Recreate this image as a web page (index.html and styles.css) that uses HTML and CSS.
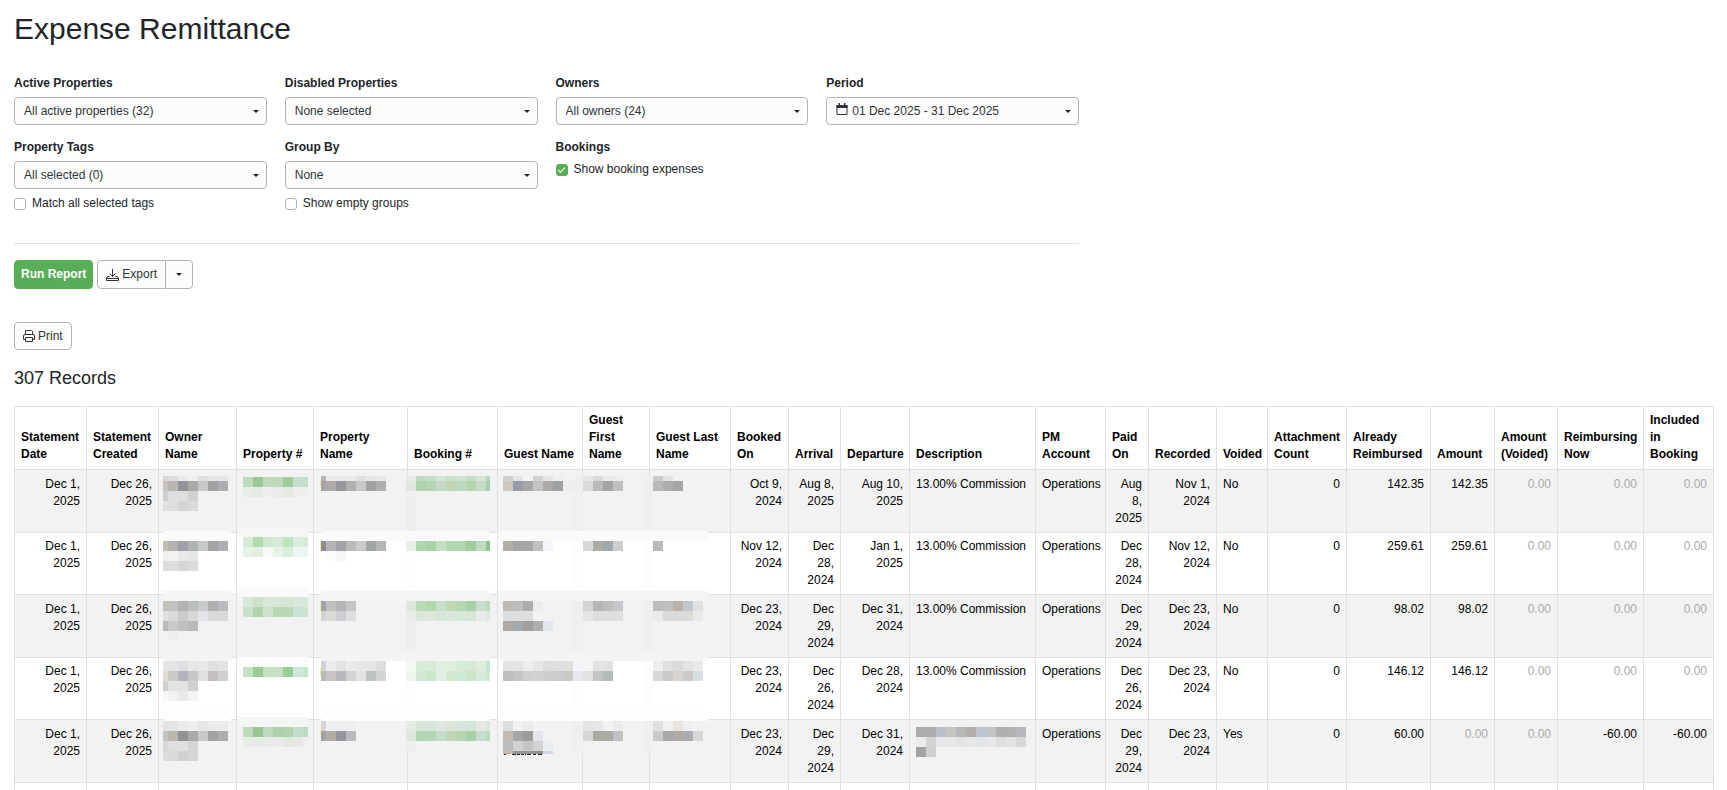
FILE: index.html
```html
<!DOCTYPE html>
<html lang="en">
<head>
<meta charset="utf-8">
<title>Expense Remittance</title>
<link rel="stylesheet" href="styles.css">
</head>
<body>
<main class="page">
  <h1 class="title">Expense Remittance</h1>
  <form class="filters">
    <div class="field">
      <label class="label" for="active">Active Properties</label>
      <div class="picker"><select class="control" id="active"><option>All active properties (32)</option></select></div>
    </div>
    <div class="field">
      <label class="label" for="disabled">Disabled Properties</label>
      <div class="picker"><select class="control" id="disabled"><option>None selected</option></select></div>
    </div>
    <div class="field">
      <label class="label" for="owners">Owners</label>
      <div class="picker"><select class="control" id="owners"><option>All owners (24)</option></select></div>
    </div>
    <div class="field">
      <label class="label" for="period">Period</label>
      <div class="picker"><button class="control period" id="period" type="button"><svg class="cal" width="12" height="13" viewBox="0 0 12 13"><path d="M1 2.5h10v9H1z" fill="none" stroke="currentColor"/><path d="M.5 2h11v3H.5zM2.5 0h1.500v2h-1.500zM8 0h1.500v2H8z" fill="currentColor"/></svg>01 Dec 2025 - 31 Dec 2025</button></div>
    </div>
    <div class="field">
      <label class="label" for="tags">Property Tags</label>
      <div class="picker"><select class="control" id="tags"><option>All selected (0)</option></select></div>
      <label class="check"><input class="box" type="checkbox">Match all selected tags</label>
    </div>
    <div class="field">
      <label class="label" for="group">Group By</label>
      <div class="picker"><select class="control" id="group"><option>None</option></select></div>
      <label class="check"><input class="box" type="checkbox">Show empty groups</label>
    </div>
    <div class="field">
      <span class="label">Bookings</span>
      <label class="check check-first"><input class="box" type="checkbox" checked>Show booking expenses</label>
    </div>
  </form>
  <div class="actions">
    <button class="btn btn-run" type="button">Run Report</button>
    <div class="split">
      <button class="btn btn-export" type="button"><svg width="13" height="12" viewBox="0 0 13 12" fill="none" stroke="currentColor"><path d="M6.500 0v7.500M3.500 4.500l3 3 3-3M3.500 7.500h-2l-1 2.500v1.500h12V10l-1-2.500h-2M.5 9.500h12"/></svg>Export</button>
      <button class="btn btn-more" type="button" aria-label="More export options"><span class="caret"></span></button>
    </div>
  </div>
  <button class="btn btn-print" type="button"><svg width="12" height="12" viewBox="0 0 12 12" fill="none" stroke="currentColor"><path d="M2.500 4V.5h6l1 1V4M2.500 9.500h-2V6q0-1.500 1.500-1.500h8q1.500 0 1.500 1.500v3.500h-2M2.500 7.500h7v4h-7z"/></svg>Print</button>
  <h2 class="count">307 Records</h2>
  <div class="records">
    <table class="table">
      <colgroup>
        <col class="w72"><col class="w72"><col class="w78"><col class="w77"><col class="w94"><col class="w90"><col class="w85"><col class="w67"><col class="w81"><col class="w58"><col class="w52"><col class="w69"><col class="w126"><col class="w70"><col class="w43"><col class="w68"><col class="w51"><col class="w79"><col class="w84"><col class="w64"><col class="w63"><col class="w86"><col class="w70">
      </colgroup>
      <thead>
        <tr><th>Statement Date</th><th>Statement Created</th><th>Owner Name</th><th>Property #</th><th>Property Name</th><th>Booking #</th><th>Guest Name</th><th>Guest First Name</th><th>Guest Last Name</th><th>Booked On</th><th>Arrival</th><th>Departure</th><th>Description</th><th>PM Account</th><th>Paid On</th><th>Recorded</th><th>Voided</th><th>Attachment Count</th><th>Already Reimbursed</th><th>Amount</th><th>Amount (Voided)</th><th>Reimbursing Now</th><th>Included in Booking</th></tr>
      </thead>
      <tbody>
        <tr><td class="num">Dec 1, 2025</td><td class="num">Dec 26, 2025</td><td></td><td></td><td></td><td></td><td></td><td></td><td></td><td class="num">Oct 9, 2024</td><td class="num">Aug 8, 2025</td><td class="num">Aug 10, 2025</td><td>13.00% Commission</td><td>Operations</td><td class="num">Aug 8, 2025</td><td class="num">Nov 1, 2024</td><td>No</td><td class="num">0</td><td class="num">142.35</td><td class="num">142.35</td><td class="num zero">0.00</td><td class="num zero">0.00</td><td class="num zero">0.00</td></tr>
        <tr><td class="num">Dec 1, 2025</td><td class="num">Dec 26, 2025</td><td></td><td></td><td></td><td></td><td></td><td></td><td></td><td class="num">Nov 12, 2024</td><td class="num">Dec 28, 2024</td><td class="num">Jan 1, 2025</td><td>13.00% Commission</td><td>Operations</td><td class="num">Dec 28, 2024</td><td class="num">Nov 12, 2024</td><td>No</td><td class="num">0</td><td class="num">259.61</td><td class="num">259.61</td><td class="num zero">0.00</td><td class="num zero">0.00</td><td class="num zero">0.00</td></tr>
        <tr><td class="num">Dec 1, 2025</td><td class="num">Dec 26, 2025</td><td></td><td></td><td></td><td></td><td></td><td></td><td></td><td class="num">Dec 23, 2024</td><td class="num">Dec 29, 2024</td><td class="num">Dec 31, 2024</td><td>13.00% Commission</td><td>Operations</td><td class="num">Dec 29, 2024</td><td class="num">Dec 23, 2024</td><td>No</td><td class="num">0</td><td class="num">98.02</td><td class="num">98.02</td><td class="num zero">0.00</td><td class="num zero">0.00</td><td class="num zero">0.00</td></tr>
        <tr><td class="num">Dec 1, 2025</td><td class="num">Dec 26, 2025</td><td></td><td></td><td></td><td></td><td></td><td></td><td></td><td class="num">Dec 23, 2024</td><td class="num">Dec 26, 2024</td><td class="num">Dec 28, 2024</td><td>13.00% Commission</td><td>Operations</td><td class="num">Dec 26, 2024</td><td class="num">Dec 23, 2024</td><td>No</td><td class="num">0</td><td class="num">146.12</td><td class="num">146.12</td><td class="num zero">0.00</td><td class="num zero">0.00</td><td class="num zero">0.00</td></tr>
        <tr><td class="num">Dec 1, 2025</td><td class="num">Dec 26, 2025</td><td></td><td></td><td></td><td></td><td></td><td></td><td></td><td class="num">Dec 23, 2024</td><td class="num">Dec 29, 2024</td><td class="num">Dec 31, 2024</td><td></td><td>Operations</td><td class="num">Dec 29, 2024</td><td class="num">Dec 23, 2024</td><td>Yes</td><td class="num">0</td><td class="num">60.00</td><td class="num zero">0.00</td><td class="num zero">0.00</td><td class="num">-60.00</td><td class="num">-60.00</td></tr>
        <tr><td></td><td></td><td></td><td></td><td></td><td></td><td></td><td></td><td></td><td></td><td></td><td></td><td></td><td></td><td></td><td></td><td></td><td></td><td></td><td></td><td></td><td></td><td></td></tr>
      </tbody>
    </table>
    <svg class="mosaic" id="mosaic" aria-hidden="true"></svg>
  </div>
</main>
<script src="mosaic.js"></script>
</body>
</html>
```
FILE: styles.css
```css
* { box-sizing: border-box; }
html { overflow: hidden; }
body { margin: 0; background: #fff; color: #212529; font: 12px/17px "Liberation Sans", Arial, sans-serif; height: 100vh; overflow: hidden; }
.page { padding: 11px 14px 0; }
.title { margin: 0 0 28px; font-size: 30px; line-height: 36px; font-weight: 400; }
.filters { display: grid; grid-template-columns: repeat(4, 1fr); column-gap: 18px; row-gap: 13px; max-width: 1065px; height: 169px; align-content: start; border-bottom: 1px solid #dee2e2; }
.label { display: block; margin-bottom: 5px; font-weight: 700; }
.field { padding-bottom: 1px; }
.picker { position: relative; }
.control { display: block; width: 100%; height: 28px; margin: 0; padding: 0 24px 0 9px; border: 1px solid #adb5bd; border-radius: 4px; background: #fcfcfc; color: #303438; font: inherit; text-align: left; appearance: none; }
.picker::after { content: ""; position: absolute; right: 8px; top: 13px; border: 3px solid transparent; border-top-color: #212529; border-bottom: 0; }
.period { display: flex; align-items: center; gap: 4px; }
.cal { margin-bottom: 4px; }
.check { display: flex; align-items: center; gap: 6px; margin-top: 6px; }
.check-first { margin-top: 0; }
.box { appearance: none; width: 12px; height: 12px; margin: 0; border: 1px solid #adb5bd; border-radius: 3px; background: #fff; }
.box:checked { border-color: #57ae57; background: #57ae57; display: grid; place-items: center; }
.box:checked::after { content: ""; width: 6px; height: 3px; border: solid #fff; border-width: 0 0 1px 1px; transform: translateY(-1px) rotate(-45deg); }
.actions { display: flex; gap: 4px; margin: 16px 0 33px; }
.btn { display: inline-flex; align-items: center; justify-content: center; gap: 3px; height: 28px; margin: 0; padding: 0 8px; border: 1px solid #adb5bd; border-radius: 4px; background: #fcfcfc; color: #303438; font: inherit; }
.actions .btn { height: 29px; }
.actions .btn-run { padding: 0 6px; border-color: #57ae57; background: #57ae57; color: #fff; font-weight: 700; }
.split { display: flex; }
.btn-export { border-radius: 4px 0 0 4px; }
.btn-more { width: 28px; margin-left: -1px; padding: 0; border-radius: 0 4px 4px 0; }
.caret { border: 3px solid transparent; border-top-color: #212529; border-bottom: 0; }
.count { margin: 17px 0 16px; font-size: 18px; line-height: 23px; font-weight: 400; }
.records { position: relative; }
.table { width: 100%; table-layout: fixed; border-collapse: collapse; color: #000; }
.table th, .table td { padding: 6px 3px 6px 6px; border: 1px solid #dee2e6; text-align: left; vertical-align: top; }
.table th { vertical-align: bottom; padding: 5px 3px 6px 6px; }
.table td { height: 62px; padding-bottom: 5px; }
.table tr:nth-child(even) td { padding-top: 5px; }
.table tbody tr:nth-child(odd) { background: #f2f2f2; }
.table .num { padding-right: 6px; text-align: right; }
.table .zero { color: #aaa; }
.mosaic { position: absolute; top: 0; left: 0; width: 100%; height: 100%; pointer-events: none; shape-rendering: crispEdges; }
.w43 { width: 43px; } .w51 { width: 51px; } .w52 { width: 52px; } .w58 { width: 58px; }
.w63 { width: 63px; } .w64 { width: 64px; } .w67 { width: 67px; } .w68 { width: 68px; }
.w69 { width: 69px; } .w70 { width: 70px; } .w72 { width: 72px; } .w77 { width: 77px; }
.w78 { width: 78px; } .w79 { width: 79px; } .w81 { width: 81px; } .w84 { width: 84px; }
.w85 { width: 85px; } .w86 { width: 86px; } .w90 { width: 90px; } .w94 { width: 94px; } .w126 { width: 126px; }
```
FILE: mosaic.js
```js
// Pixelation over the private columns of the records table.
const svg = document.getElementById('mosaic');

function block(x, y, w, h, fill) {
  const r = document.createElementNS('http://www.w3.org/2000/svg', 'rect');
  r.setAttribute('x', x);
  r.setAttribute('y', y);
  r.setAttribute('width', w);
  r.setAttribute('height', h);
  r.setAttribute('fill', fill);
  svg.appendChild(r);
}

// Pale smears where the pixelated areas cross cell borders.
[392, 559, 629].forEach(x => {
  [[70, 55, '#efeff0'], [125, 63, '#fcfdfd'], [188, 63, '#efeff0'], [251, 62, '#fcfdfd'], [313, 34, '#efeff0']]
    .forEach(([y, h, c]) => block(x, y, 10, h, c));
});
[[125, '#fafafa'], [185, '#f3f4f4'], [245, '#f3f4f3'], [305, '#fcfdfd']].forEach(([y, c]) => {
  block(149, y, 68, 10, c);
  block(307, y, 169, 10, c);
  block(484, y, 210, 10, c);
});
[[121, '#f6f6f6'], [181, '#fafafa'], [251, '#fbfcfc'], [311, '#f4f5f5']].forEach(([y, c]) => block(224, y, 70, 10, c));
[73, 136, 198, 261, 323].forEach(y => block(306, y, 1, 8, '#f2efa0'));

// Columns: left edge, width of the first block, total width; then rows of [y, height, colours].
const columns = [
  [149, 5, 65, [
    [70, 5, 'd9d6d3 dcdede eaeaea ecf0f2 dfdfdf e6e6e6 e6e6e6'],
    [75, 10, 'c6c2bf b9b5b1 929298 a8aaa7 c8c8c8 a3a1a2 acadb1'],
    [85, 10, 'cfcfcf dedede dedede d1d1d1'],
    [95, 10, 'e0e0e0 dedede d4d6d6 dadada'],
    [135, 10, 'c3beb4 b4b1af a0a0a6 aeb2b1 c8c8c8 a4a2a3 adaeb2'],
    [145, 10, 'ededed f2f2f2 eae9e7 e6e6e6'],
    [155, 10, 'dcdcdc dedede d5d6d6 dcdcdc'],
    [195, 10, 'c3c0ba c3c1c0 b2b2b7 babebc c9c9c9 b0b0b0 babbbf'],
    [205, 10, 'e0e0e0 dadada cacacc d8d8d8 e2e4e8 dadada dadada'],
    [215, 10, 'bababa cacaca c0c0c0 b9bab9'],
    [225, 10, 'f2f2f2 eeeeee'],
    [255, 10, 'e5e5e3 e5e5e3 dfdfe3 e6e6e6 e8eae9 dfdfdf e3e3e5'],
    [265, 10, 'dedad6 cbcac7 b3b3ba c6c8c7 e0e0e0 c4bfbe d0d0d3'],
    [275, 10, 'cfcfcf e3e3e3 e3e3e3 d0d0d0'],
    [285, 10, 'f8f8f8 f2f2f2 e8eae9 f4f4f4'],
    [315, 10, 'e3e3e3 e3e4e5 ebebeb edf0ef e7e7e7 ebebeb ebebeb'],
    [325, 10, 'c6c2bf b9b5b1 929298 a8aaa7 c8c8c8 a3a1a2 acadb1'],
    [335, 10, 'd7d7d7 e0e0e0 e0e0e0 d5d5d5'],
    [345, 10, 'dcdcdc dadada d1d1d1 d6d6d6']]],
  [229, 10, 65, [
    [71, 10, 'bfd9be 9cc796 bedabd bedabd a2cba2 c4ddcd c5dccd'],
    [81, 10, 'e7ece8 e3ebe3 efefef e9ece8 e3eae3 eeefee ebf0ed'],
    [131, 10, 'd5ebd6 b3d9ae cfe8cf d6ebd7 bfe2bf daeede d9eadd'],
    [141, 10, 'e5f3e6 e2efe2 f8faf9 e5f4e7 d9eddb edf6f4 eaf5ef'],
    [191, 10, 'dae8db cde0cb d8e7d8 d7e6d8 d4e4d5 d8e7dc d8e7dc'],
    [201, 10, 'cbe0cb b1d2af cee2ce b9d8b6 b9d8b6 c8e2d3 cfe2d2'],
    [261, 10, 'c2e2c3 9acb95 c3e1bd c3e1bd 9ccd97 cce8d9 c6e4cf'],
    [321, 10, 'bddabd 9bc694 bedabe aed0aa b3d3ae c1ddcb bfdac3'],
    [331, 10, 'e7ece7 e7ece7 e7ece7 e9ece9 e1e9e0 e5eae3 efefef']]],
  [307, 5, 65, [
    [70, 5, 'b5b5b5 ebebeb ebebeb e9ebec dfdfdf e6e6e6 e8e8e8'],
    [75, 10, 'a5a3aa b0acaa 96979b b0b0b0 c8c8c8 a2a2a3 b0b0b0'],
    [135, 10, '8f8b92 b4b4b4 a1a2a6 bababa c9c9cb a2a7a5 b5b5b5'],
    [145, 10, 'ffffff fbfbfb f6f6f6'],
    [195, 10, 'a3a1a9 c1c0bf b6b6b9 c6c6c7'],
    [205, 10, 'd5d2d4 dbdad7 cdced1 dfdfdf'],
    [255, 10, 'd2d1d4 ebebeb e3e3e3 ebebeb e6e7e9 e6e6e6 dedede'],
    [265, 10, 'b9b8bb cac5c4 b8b8bd d3d3d3 e3e3e3 bec4c3 d4d4d4'],
    [315, 10, 'd7d3d6 eeefef eeefef eeeeee'],
    [325, 10, 'a3a2a9 b0aca8 96979b b9b9be']]],
  [392, 10, 84, [
    [70, 5, 'e9ebe9 c2dcc4 c5dec7 d4e7d7 c8dfc8 d0e3d1 c4dec7 d6e4d7 b6d7c0'],
    [75, 10, 'e1e6e0 aed2ad b5d4b4 c3dbc6 c0d5b5 b9dac2 b5d4ad c6dbc8 a5cfb0'],
    [135, 10, 'e9efe7 acd8ac a7d4a4 c3e0c2 b0d8ae b0d7ae 9fce9c bbddbc 8dc592'],
    [195, 10, 'e1e6e0 b9d9b9 b1d6b0 c8dfc8 c0d6b4 b5d6b3 a8d1a9 c8ddcb bad9c3'],
    [205, 10, 'e9ece9 dce7dc dde8da d6e5da dae7da d6e6d8 d5e6d6 e8edeb e0e9e0'],
    [255, 10, 'f4f9f4 d7ecd9 d7ecd7 dff0e3 e2efdb d5ecd8 d4ead6 ddeedd c3e4d1'],
    [265, 10, 'f0f5f0 d1e8d3 cbe6c9 dff0e3 d3e8cd cfe8d1 cae5ca d7ebd9 cee7cf'],
    [315, 10, 'e6ebe6 d8e5d9 d9e5d9 dee8e0 dde5d7 d8e5db d4e4d6 e3eae5 dbe7db'],
    [325, 10, 'e1e6e0 b2d4b2 b5d6b6 c5dcc8 c0d6b6 b5d5b3 a9cfa9 c8dccf bcd9c0']]],
  [489, 10, 80, [
    [70, 5, 'd3cfcc e2e5e8 f3f4f3 d4d2cf e6e3e1 eceff1'],
    [75, 10, 'cdc8c2 979ba4 a7a7a5 c3c3c3 aba8a5 9da0a4 eeeeee'],
    [135, 10, 'b2aea8 a5a5a7 a6a6a8 c0c0c0 f4f5fa'],
    [195, 10, 'c0bab7 bcbdbf aeacae ececee'],
    [205, 10, 'dedede dedede dedede'],
    [215, 10, 'afa9a7 a3a8ab a09f9c afadad e2e5eb'],
    [255, 10, 'e5e4e2 e5e4e2 ebedf0 e6e6e6 dcdedd dfdfdf e2dfdd f4f4f8'],
    [265, 10, 'bfbfbf c5c5c7 cfcfcf d1d1d1 cdcdcf cbcbcb c9c9c9 e9e8ee'],
    [315, 10, 'dedede f1f1f1 ebebeb'],
    [325, 10, 'c0bbb7 a5a6aa 9d9c9c e3e6ea'],
    [335, 10, 'bebdbd d2d2d2 c4c5c3 d2d2d2 ebecee'],
    [345, 3, 'c2b8b2 929497 989691 8e8f91 d2d8e3']]],
  [569, 10, 40, [
    [70, 5, 'e6e5e4 dadada e8eaec ececec'],
    [75, 10, 'dbdbdb bbbab8 a4a5a8 c0c0c0'],
    [135, 10, 'd8d8d6 adaba5 a1a7ab cdcdcf'],
    [195, 10, 'd3d3d3 b6b5b3 bdbdbd c6c7cb'],
    [205, 10, 'e6e5e3 dedede dedede dedede'],
    [255, 10, 'f6f5f3 e3e3e3 e1e1e1'],
    [265, 10, 'e3e2e0 c5c5c5 b7babb'],
    [315, 10, 'e6e4e2 e5e7e9 f2f2f2 ebebeb'],
    [325, 10, 'd6d6d6 abaaa5 abaaa5 bfc2c4']]],
  [639, 10, 50, [
    [70, 5, 'cacaca e3e3e3'],
    [75, 10, 'b9b9b9 afaeac a6a6a8'],
    [135, 10, 'b9b9b9'],
    [195, 10, 'bdbdbd c0c0c0 b9b2ad c2c7cc e0e1e3'],
    [205, 10, 'ebebeb dadada dadada dbdbd8 e9e9e9'],
    [255, 10, 'efeeed e0e0de dadad8 e3e3e1 e9eae9'],
    [265, 10, 'd8d8d8 cacbcd d7d3d1 cacaca d9dee0'],
    [315, 10, 'dfdfe0 f1f3f2 e6e3e1 efeff1'],
    [325, 10, 'cacaca a9a9ab b0aaa8 abadb2 d8d8d8']]],
  [902, 10, 110, [
    [321, 10, 'aeacab b0aeac bcbfc5 c5c5c3 b7b7b5 b4aeaa bcc4ce c3c4c5 b0afb2 b2b1b1 b8b7bb'],
    [331, 10, 'ebebeb d4d4d4 e6e7e9 e6e7e9 e3e4e2 e6e7e9 e2e4e7 e6e7e9 dedede e2e3e5 d8d8da'],
    [341, 10, 'a2a2a2 d0d0d0']]]
];

columns.forEach(([left, first, total, rows]) => rows.forEach(([y, h, colours]) => {
  let x = left;
  colours.split(' ').forEach((c, i) => {
    const w = Math.min(i ? 10 : first, left + total - x);
    block(x, y, w, h, '#' + c);
    x += w;
  });
}));

// Lower edge of the hidden guest name that shows below the pixelation.
[[490, 2], [498, 4], [503, 3], [507, 3], [511, 1], [513, 4], [519, 3], [524, 4]].forEach(([x, w]) => block(x, 348, w, 1, '#222222'));
```
